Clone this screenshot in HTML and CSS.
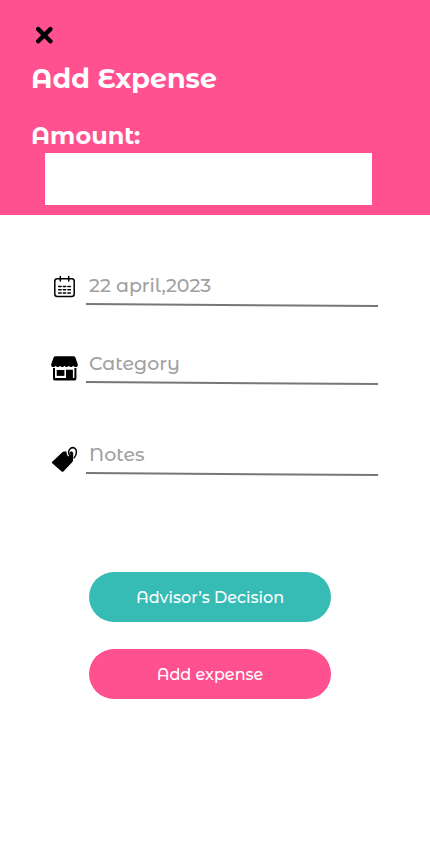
FILE: index.html
```html
<!DOCTYPE html>
<html lang="en">
<head>
<meta charset="utf-8">
<title>Add Expense</title>
<link rel="stylesheet" href="styles.css">
</head>
<body>
<main class="screen">
  <header class="header">
    <svg class="close" viewBox="0 0 18 18"><path d="M3.200 3.100 15.400 15.300M15.400 3.100 3.200 15.300"/></svg>
    <h1 class="title">Add Expense</h1>
    <h2 class="amount-label">Amount:</h2>
    <div class="amount-box"></div>
  </header>
  <section class="fields">
    <div class="field">
      <svg class="icon" viewBox="0 0 28 28"><g fill="none" stroke="#000" stroke-width="1.5" stroke-linecap="round"><rect x="3.800" y="4.700" width="19.400" height="17.900" rx="2.500"/><path d="M9.300 2.500v4.500M17.700 2.500v4.500"/><path d="M7.700 12.500h2.400M12.300 12.500h2.400M16.900 12.500h2.400M7.700 15.800h2.400M12.300 15.800h2.400M16.900 15.800h2.400M7.700 19.100h2.400M12.300 19.100h2.400M16.900 19.100h2.400"/></g></svg>
      <div class="value"><span class="text">22 april,2023</span><svg class="line" viewBox="0 0 292 4"><path d="M0 1 292 3"/></svg></div>
    </div>
    <div class="field">
      <svg class="icon" viewBox="0 0 28 28"><path d="M4.500 4.200h18q1.400 0 1.900 1.400l2.400 6.600c.5 3.400-3.200 3.700-4.600 1.500-1 1.700-3.500 1.700-4.400 0-1 1.700-3.500 1.700-4.300 0-1 1.700-3.500 1.700-4.400 0-1 1.700-3.400 1.700-4.300 0C3.400 15.900-.3 15.600.2 12.200l2.400-6.600Q3.100 4.200 4.500 4.200Z"/><path fill-rule="evenodd" d="M2 16h2v10.100h11V17.700h6.900v8.400h1.500V16h2v10.400q0 2.200-2.200 2.200H4.200Q2 28.600 2 26.400Z"/><path d="M5.700 18h7.700v5.900H5.700z"/></svg>
      <div class="value"><span class="text">Category</span><svg class="line" viewBox="0 0 292 4"><path d="M0 1 292 3"/></svg></div>
    </div>
    <div class="field notes-row">
      <svg class="icon" viewBox="0 0 28 28"><path d="m1.200 17.700 10.200-9.500q.7-.6 1.600-.6l7.600-.1q1.600 0 1.600 1.500l-.1 7.300q0 .9-.7 1.600l-9 9.500q-.8.8-1.700 0l-9.500-8.200q-.7-.7 0-1.500Z"/><path fill="none" stroke="#fff" stroke-width="3.200" d="M18.300 11.400c-1.400-1.700-1.200-4.200.2-6"/><path fill="none" stroke="#000" stroke-width="1.500" stroke-linecap="round" d="M18.900 11.600c-2.100-2-1.500-5.800.7-7.300 2.900-1.800 5.900.4 5.800 3.700 0 2.500-.8 4.200-2.200 5.700"/></svg>
      <div class="value"><span class="text">Notes</span><svg class="line" viewBox="0 0 292 4"><path d="M0 1 292 3"/></svg></div>
    </div>
  </section>
  <div class="actions">
    <button class="button teal">Advisor’s Decision</button>
    <button class="button pink">Add expense</button>
  </div>
</main>
</body>
</html>
```
FILE: styles.css
```css
* { box-sizing: border-box; }
body { margin: 0; background: #fff; font-family: "Montserrat Alternates", Montserrat, Inter, sans-serif; }
.screen { min-height: 858px; }
.header { height: 215px; padding: 26px 0 0 31px; background: #ff508f; color: #fff; }
.close { display: block; width: 18px; height: 18px; margin-left: 4px; fill: none; stroke: #000; stroke-width: 4.4; stroke-linecap: round; }
.title { margin: 18px 0 0; font-size: 27px; line-height: 34px; font-weight: 700; white-space: nowrap; }
.amount-label { margin: 25px 0 0; font-size: 24px; line-height: 30px; font-weight: 700; }
.amount-box { width: 327px; height: 52px; margin: 2px 0 0 14px; background: #fff; }
.fields { padding: 58px 0 0 51px; }
.field { display: flex; height: 34px; margin-bottom: 44px; gap: 7px; }
.notes-row { margin-top: 57px; margin-bottom: 0; }
.icon { width: 28px; height: 28px; flex: none; margin-top: 1px; overflow: visible; }
.notes-row .icon { margin-top: 2px; }
.value { width: 292px; display: flex; flex-direction: column; }
.text { height: 30px; line-height: 25px; padding-left: 3px; font-size: 19px; font-weight: 500; color: #a1a1a1; white-space: nowrap; }
.line { display: block; width: 292px; height: 4px; stroke: #777; stroke-width: 2; overflow: visible; }
.actions { display: flex; flex-direction: column; gap: 27px; padding: 96px 0 0 89px; }
.button { width: 242px; height: 50px; padding: 0; border: 0; border-radius: 25px; color: #fff; font: 500 16px "Montserrat Alternates", Montserrat, Inter, sans-serif; }
.teal { background: #36bbb5; }
.pink { background: #ff508f; }
```
